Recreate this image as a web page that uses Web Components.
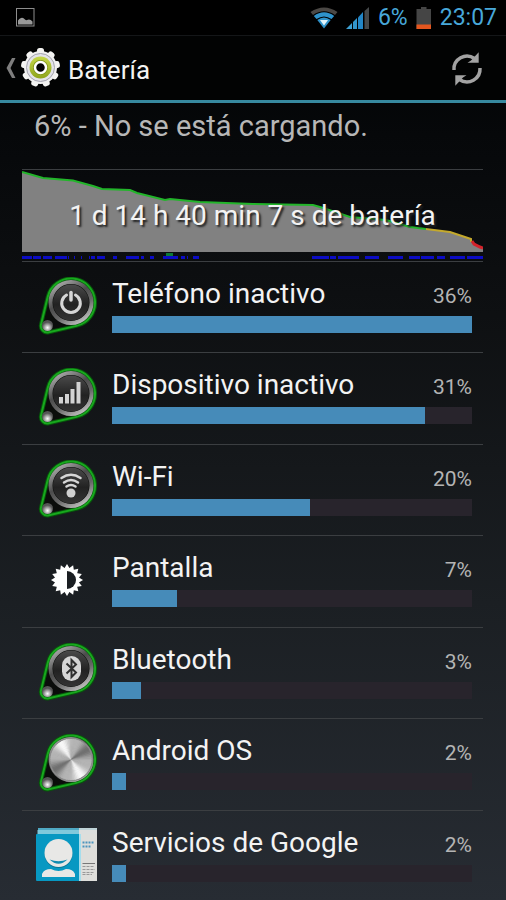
<!DOCTYPE html>
<html lang="es">
<head>
<meta charset="utf-8">
<meta name="viewport" content="width=device-width, initial-scale=1">
<title>Batería</title>
<style>
    html {
        background: #000;
    }
    body {
        margin: 0;
        height: 100vh;
        overflow: hidden;
        background: linear-gradient(#000 0%, #06080a 15%, #0e1012 35%, #1b1f23 67%, #272c33 100%);
        color: #f3f3f3;
        font-family: Roboto, "Liberation Sans", sans-serif;
    }
</style>
</head>
<body>
<battery-screen></battery-screen>

<script>
class StatusBar extends HTMLElement {
    constructor() {
        super();
        this.attachShadow({ mode: 'open' });
        this.shadowRoot.innerHTML = `
            <style>
                :host {
                    display: flex;
                    align-items: center;
                    height: 35px;
                    padding: 0 9px 0 15px;
                    border-bottom: 1px solid #141618;
                    background: #000;
                    color: #48a8da;
                    font-size: 23px;
                    line-height: 36px;
                }
                svg { display: block; }
                .right {
                    display: flex;
                    align-items: center;
                    gap: 8px;
                    margin-left: auto;
                }
            </style>
            <svg width="21" height="21" viewBox="0 0 21 21" aria-hidden="true">
                <rect x="1.500" y="1.500" width="17.500" height="17.500" fill="none" stroke="#8d8d8d"/>
                <path d="M3 17.500V13.500Q4 11.500 6 11Q8 10 10 12.500Q11 13.500 12 13Q15 11.500 17.500 14.500V17.500Z" fill="#999"/>
            </svg>
            <div class="right">
                <svg width="28" height="22" viewBox="0 0 28 22" aria-hidden="true">
                    <path d="M0.500 5Q14 -4 27.500 5L25 8Q14 0.500 3 8Z" fill="#4b4845"/>
                    <path d="M3.800 9Q14 1.500 24.200 9L21.500 12Q14 7 6.500 12Z" fill="#2f93cb"/>
                    <path d="M7.300 13Q14 8 20.700 13L14 21.500Z" fill="#2f93cb"/>
                    <path d="M10 13H18L14 18.500Z" fill="#e2f4fc"/>
                </svg>
                <svg width="24" height="22" viewBox="0 0 24 22" aria-hidden="true">
                    <path d="M0 22L6 16V22Z" fill="#3d9fd2"/>
                    <path d="M7 15L11 11V22H7Z" fill="#3295cc"/>
                    <path d="M12 10.500L17 5V22H12Z" fill="#2386c6"/>
                    <path d="M18.500 4L23 0V22H18.500Z" fill="#45484a"/>
                </svg>
                <span>6%</span>
                <svg width="16" height="22" viewBox="0 0 16 22" aria-hidden="true">
                    <path d="M5 0H10.500V2H15V22H0.500V2H5Z" fill="#454545"/>
                    <rect x="0.500" y="17.500" width="14.500" height="4.500" fill="#e4561f"/>
                </svg>
                <time>23:07</time>
            </div>
        `;
    }
}

class ActionBar extends HTMLElement {
    constructor() {
        super();
        this.attachShadow({ mode: 'open' });
        this.shadowRoot.innerHTML = `
            <style>
                :host {
                    display: flex;
                    align-items: center;
                    justify-content: space-between;
                    height: 64px;
                    padding: 0 22px 0 5px;
                    background: #020303;
                    border-bottom: 3px solid #37899f;
                }
                a {
                    display: flex;
                    align-items: center;
                    color: inherit;
                    text-decoration: none;
                }
                h1 {
                    margin: 0 0 0 7px;
                    padding-top: 4px;
                    font-size: 26px;
                    font-weight: 400;
                    line-height: 32px;
                }
                button {
                    display: block;
                    padding: 2px 0 0;
                    border: 0;
                    background: none;
                    cursor: pointer;
                }
                svg { display: block; }
            </style>
            <a href="#">
                <svg width="15" height="22" viewBox="0 0 15 22" aria-hidden="true">
                    <path d="M7 1H10.500L5.500 11L10.500 21H7L1.500 11Z" fill="#7e7e7e"/>
                </svg>
                <svg class="gear" width="41" height="41" viewBox="-20.500 -19.500 41 41" aria-hidden="true">
                    <defs>
                        <linearGradient id="green" x1="0" y1="0" x2="0" y2="1">
                            <stop offset="0" stop-color="#c5d84a"/>
                            <stop offset="1" stop-color="#8fa51c"/>
                        </linearGradient>
                    </defs>
                    <g class="teeth" fill="#f4f4f2"></g>
                    <circle r="16.500" fill="#f1f1f0"/>
                    <circle r="14" fill="#e3e3e8" stroke="#a3a3ae"/>
                    <circle r="11" fill="url(#green)"/>
                    <circle r="7.500" fill="#7f9413"/>
                    <circle r="5.500" fill="#050505" stroke="#fff" stroke-width="2.500"/>
                </svg>
                <h1><slot></slot></h1>
            </a>
            <button type="button" aria-label="Actualizar">
                <svg width="34" height="36" viewBox="0 0 34 36" aria-hidden="true">
                    <g id="arrow">
                        <path d="M4 19A13 13 0 0 1 24.500 7.500" fill="none" stroke="#a3a3a3" stroke-width="3.500"/>
                        <path d="M28.700 1.300V11.800H17.500L21 9.500Z" fill="#a3a3a3"/>
                    </g>
                    <use href="#arrow" transform="rotate(180 17 18)"/>
                </svg>
            </button>
        `;
        let teeth = '';
        for (let i = 0; i < 9; i++) {
            teeth += `<rect x="-3.500" y="-19.500" width="7" height="9" rx="2.500" transform="rotate(${i * 40})"/>`;
        }
        this.shadowRoot.querySelector('.teeth').innerHTML = teeth;
    }
}

class BatteryHistory extends HTMLElement {
    constructor() {
        super();
        this.attachShadow({ mode: 'open' });
        this.shadowRoot.innerHTML = `
            <style>
                :host {
                    display: grid;
                    align-items: center;
                    justify-items: center;
                    border-top: 1px solid #3b3e41;
                    border-bottom: 1px solid #3b3e41;
                }
                svg, p { grid-area: 1 / 1; }
                svg {
                    display: block;
                    width: 100%;
                    height: 91px;
                }
                p {
                    z-index: 1;
                    margin: 0;
                    font-size: 28px;
                    line-height: 32px;
                    text-shadow: 2px 2px 2px #222;
                }
            </style>
            <svg viewBox="0 1 461 91" preserveAspectRatio="none" aria-hidden="true">
                <path d="M0 3L21 9L51 11.500L71 17L80 20L108 21L115 24L143 31L148 30L178 33L231 35L291 36L298 38L328 48L364 51L388 58L404 60L428 63L449 70L451 73L458 78L461 79V83H0Z" fill="#818181"/>
                <g fill="none" stroke-width="2">
                    <path d="M0 3L21 9L51 11.500L71 17L80 20L108 21L115 24L143 31L148 30L178 33L231 35L291 36L298 38L328 48L364 51L388 58L404 60" stroke="#22b52a"/>
                    <path d="M404 60L428 63L449 70V73" stroke="#c4a92c"/>
                    <path d="M450 72L452 75L458 78L461 79" stroke="#d3222a" stroke-width="3"/>
                </g>
                <path d="M144 85.500H151" stroke="#0a7a35" stroke-width="3"/>
                <g class="awake" fill="#0c0cc4"></g>
            </svg>
            <p><slot></slot></p>
        `;
        // [start, length] of each wake period along the time axis
        const awake = [
            [0, 10], [11, 8], [21, 9], [33, 12], [46, 1], [52, 1], [59, 1], [67, 1], [69, 4], [75, 8],
            [91, 4], [104, 13], [119, 3], [128, 4], [141, 15], [159, 4], [165, 1], [171, 6],
            [290, 17], [308, 6], [316, 3], [318, 19], [343, 14], [366, 15], [387, 11], [399, 13],
            [415, 8], [428, 15], [445, 16]
        ];
        this.shadowRoot.querySelector('.awake').innerHTML = awake
            .map(([x, w]) => `<rect x="${x}" y="87" width="${w}" height="3"/>`)
            .join('');
    }
}

const GLYPHS = {
    power: `
        <path d="M29.500 18A9.300 9.300 0 1 0 38.500 18" fill="none" stroke="#d6d6d6" stroke-width="3" stroke-linecap="round"/>
        <path d="M34 15.500V23" stroke="#d6d6d6" stroke-width="3.500" stroke-linecap="round"/>`,
    signal: `
        <path d="M22 29H26V35.500H22ZM28 26H32V35.500H28ZM33.500 21H37.500V35.500H33.500ZM39.500 14H43.500V35.500H39.500Z" fill="#d3d3d3"/>`,
    wifi: `
        <g fill="none" stroke="#d6d6d6" stroke-width="2.500" stroke-linecap="round">
            <path d="M24.500 18Q34 11.500 43.500 18"/>
            <path d="M27 22.500Q34 17.500 41 22.500"/>
            <path d="M29.500 26.500Q34 23.500 38.500 26.500"/>
        </g>
        <circle cx="34" cy="33" r="4.500" fill="#d0d0d0"/>`,
    bluetooth: `
        <rect x="25" y="13" width="19" height="25" rx="9.500" fill="#d6d6d6"/>
        <path d="M29.500 20.500L39 29.500L34.500 34V17L39 21.500L29.500 30.500" fill="none" stroke="#303030" stroke-width="2"/>`,
    metal: ''
};

class UsageIcon extends HTMLElement {
    static get observedAttributes() {
        return ['name'];
    }

    constructor() {
        super();
        this.attachShadow({ mode: 'open' });
    }

    attributeChangedCallback(attribute, oldName, name) {
        this.shadowRoot.innerHTML = `
            <style>
                :host { display: block; }
                svg { display: block; }
            </style>
            ${this.draw(name)}
        `;
    }

    draw(name) {
        if (name === 'display') return this.display();
        if (name === 'contacts') return this.contacts();
        return this.dial(name);
    }

    dial(name) {
        let face = '<circle cx="34" cy="25.500" r="18" fill="url(#dark)"/>';
        if (name === 'metal') {
            // brushed steel: thin wedges, bright along one diagonal and dark across it
            face = '<circle cx="34" cy="25.500" r="22" fill="#8c8c8c"/>';
            for (let a = 0; a < 360; a += 5) {
                const v = Math.round(180 + 50 * Math.cos((a - 60) * Math.PI / 90) + 18 * Math.cos(a * Math.PI / 30));
                face += `<path d="M34 25.500L54.500 24.200V26.800Z" fill="rgb(${v},${v},${v})" transform="rotate(${a} 34 25.500)"/>`;
            }
        }
        return `
            <svg width="60" height="60" viewBox="0 0 60 60" aria-hidden="true">
                <defs>
                    <linearGradient id="rim" x1="0.200" y1="0" x2="0.800" y2="1">
                        <stop offset="0" stop-color="#aaa"/>
                        <stop offset="0.400" stop-color="#4c4c4c"/>
                        <stop offset="0.650" stop-color="#666"/>
                        <stop offset="1" stop-color="#c4c4c4"/>
                    </linearGradient>
                    <linearGradient id="dark" x1="0" y1="0" x2="0" y2="1">
                        <stop offset="0" stop-color="#4a4a4a"/>
                        <stop offset="0.550" stop-color="#222"/>
                        <stop offset="1" stop-color="#343434"/>
                    </linearGradient>
                    <radialGradient id="stud" cx="0.500" cy="0.700">
                        <stop offset="0" stop-color="#fff"/>
                        <stop offset="0.500" stop-color="#aaa"/>
                        <stop offset="1" stop-color="#555"/>
                    </radialGradient>
                </defs>
                <path d="M10.700 19.900A24 24 0 1 1 39.500 48.900L11.800 55.300A6.500 6.500 0 0 1 4 47.500Z" fill="#0b0d0b" stroke="#07570b" stroke-width="4"/>
                <path d="M10.700 19.900A24 24 0 1 1 39.500 48.900L11.800 55.300A6.500 6.500 0 0 1 4 47.500Z" fill="none" stroke="#18a81e" stroke-width="2"/>
                <circle cx="34" cy="25.500" r="20.500" fill="none" stroke="url(#rim)" stroke-width="4"/>
                ${face}
                ${GLYPHS[name]}
                <circle cx="10.500" cy="48.500" r="5.500" fill="url(#stud)"/>
            </svg>`;
    }

    display() {
        let rays = '';
        for (let i = 0; i < 16; i++) {
            rays += `<path d="M-3 -11L0 -16L3 -11Z" transform="rotate(${i * 22.5})"/>`;
        }
        return `
            <svg width="60" height="60" viewBox="-30 -29 60 60" aria-hidden="true">
                <g fill="#fff">${rays}</g>
                <circle r="12" fill="#fff"/>
                <path d="M0 -9A9 9 0 0 1 0 9Z" fill="#1a1e22"/>
            </svg>`;
    }

    contacts() {
        return `
            <svg width="62" height="60" viewBox="0 1 62 60" aria-hidden="true">
                <path d="M2 3H61V7H2Z" fill="#4fa9c4"/>
                <path d="M43 3H61V7H43Z" fill="#bfd3d8"/>
                <path d="M1.500 5H61V10H1.500Z" fill="#80c9dc"/>
                <path d="M43 5H61V10H43Z" fill="#dcdedd"/>
                <rect y="9" width="44" height="47" rx="1" fill="#0798c2"/>
                <path d="M43 9H61V56H43Z" fill="#dededb"/>
                <path d="M43 9H45V56H43Z" fill="#a6ddec"/>
                <circle cx="22.500" cy="29" r="14" fill="#0a7896"/>
                <circle cx="22.500" cy="28" r="14" fill="#e8e8e6"/>
                <path d="M13.500 34.500Q22.500 38 31.500 34.500Q22.500 43 13.500 34.500Z" fill="#108bb0"/>
                <path d="M6 52V49Q8 44 15 44Q22.500 48 30 44Q37 44 39 49V52Z" fill="#e8e8e6"/>
                <g stroke-width="1">
                    <path d="M46.500 17.500H58M46.500 21.500H55" stroke="#4c94bd" stroke-width="2" stroke-dasharray="2 1"/>
                    <path d="M46.500 38.500H59" stroke="#777"/>
                    <path d="M46.500 41.500H58M46.500 44.500H59M46.500 47.500H58M46.500 49.500H56" stroke="#999" stroke-dasharray="3 1"/>
                </g>
            </svg>`;
    }
}

class UsageRow extends HTMLElement {
    constructor() {
        super();
        this.attachShadow({ mode: 'open' });
        this.shadowRoot.innerHTML = `
            <style>
                :host {
                    display: grid;
                    grid-template-columns: 90px 1fr auto;
                    grid-template-rows: 48px auto;
                    align-items: end;
                    align-content: start;
                    min-height: 90px;
                    padding-right: 11px;
                    border-bottom: 1px solid #3b3e41;
                }
                usage-icon {
                    grid-row: 1 / 3;
                    align-self: start;
                    justify-self: center;
                    margin-top: 15px;
                }
                label {
                    font-size: 28px;
                    line-height: 32px;
                }
                output {
                    color: #b4b4b4;
                    font-size: 21px;
                    line-height: 28px;
                }
                progress {
                    grid-column: 2 / 4;
                    align-self: start;
                    appearance: none;
                    display: block;
                    width: 100%;
                    height: 17px;
                    margin-top: 6px;
                    border: 0;
                    background: #28242c;
                }
                progress::-webkit-progress-bar { background: #28242c; }
                progress::-webkit-progress-value { background: #468bb9; }
            </style>
            <usage-icon></usage-icon>
            <label for="share"><slot></slot></label>
            <output for="share"></output>
            <progress id="share" max="100"></progress>
        `;
    }

    connectedCallback() {
        this.shadowRoot.querySelector('usage-icon').setAttribute('name', this.getAttribute('icon') || 'metal');
        this.shadowRoot.querySelector('output').textContent = this.getAttribute('percent') + '%';
        this.shadowRoot.querySelector('progress').value = this.getAttribute('fill') || 0;
    }
}

class BatteryScreen extends HTMLElement {
    constructor() {
        super();
        this.attachShadow({ mode: 'open' });
        this.shadowRoot.innerHTML = `
            <style>
                :host {
                    display: flex;
                    flex-direction: column;
                    min-height: 100vh;
                }
                main {
                    flex: 1;
                    display: flex;
                    flex-direction: column;
                    padding: 0 23px 0 22px;
                    /* the last divider falls below the fold */
                    margin-bottom: -2px;
                }
                usage-row { flex: 1; }
                .state {
                    margin: 0;
                    padding: 7px 12px 27px;
                    color: #b7b7b7;
                    font-size: 29px;
                    line-height: 32px;
                }
            </style>
            <status-bar></status-bar>
            <action-bar>Batería</action-bar>
            <main>
                <p class="state">6% - No se está cargando.</p>
                <battery-history>1 d 14 h 40 min 7 s de batería</battery-history>
                <usage-row icon="power" percent="36" fill="100">Teléfono inactivo</usage-row>
                <usage-row icon="signal" percent="31" fill="87">Dispositivo inactivo</usage-row>
                <usage-row icon="wifi" percent="20" fill="55">Wi-Fi</usage-row>
                <usage-row icon="display" percent="7" fill="18">Pantalla</usage-row>
                <usage-row icon="bluetooth" percent="3" fill="8">Bluetooth</usage-row>
                <usage-row icon="metal" percent="2" fill="4">Android OS</usage-row>
                <usage-row icon="contacts" percent="2" fill="4">Servicios de Google</usage-row>
            </main>
        `;
    }
}

customElements.define('status-bar', StatusBar);
customElements.define('action-bar', ActionBar);
customElements.define('battery-history', BatteryHistory);
customElements.define('usage-icon', UsageIcon);
customElements.define('usage-row', UsageRow);
customElements.define('battery-screen', BatteryScreen);
</script>
</body>
</html>
